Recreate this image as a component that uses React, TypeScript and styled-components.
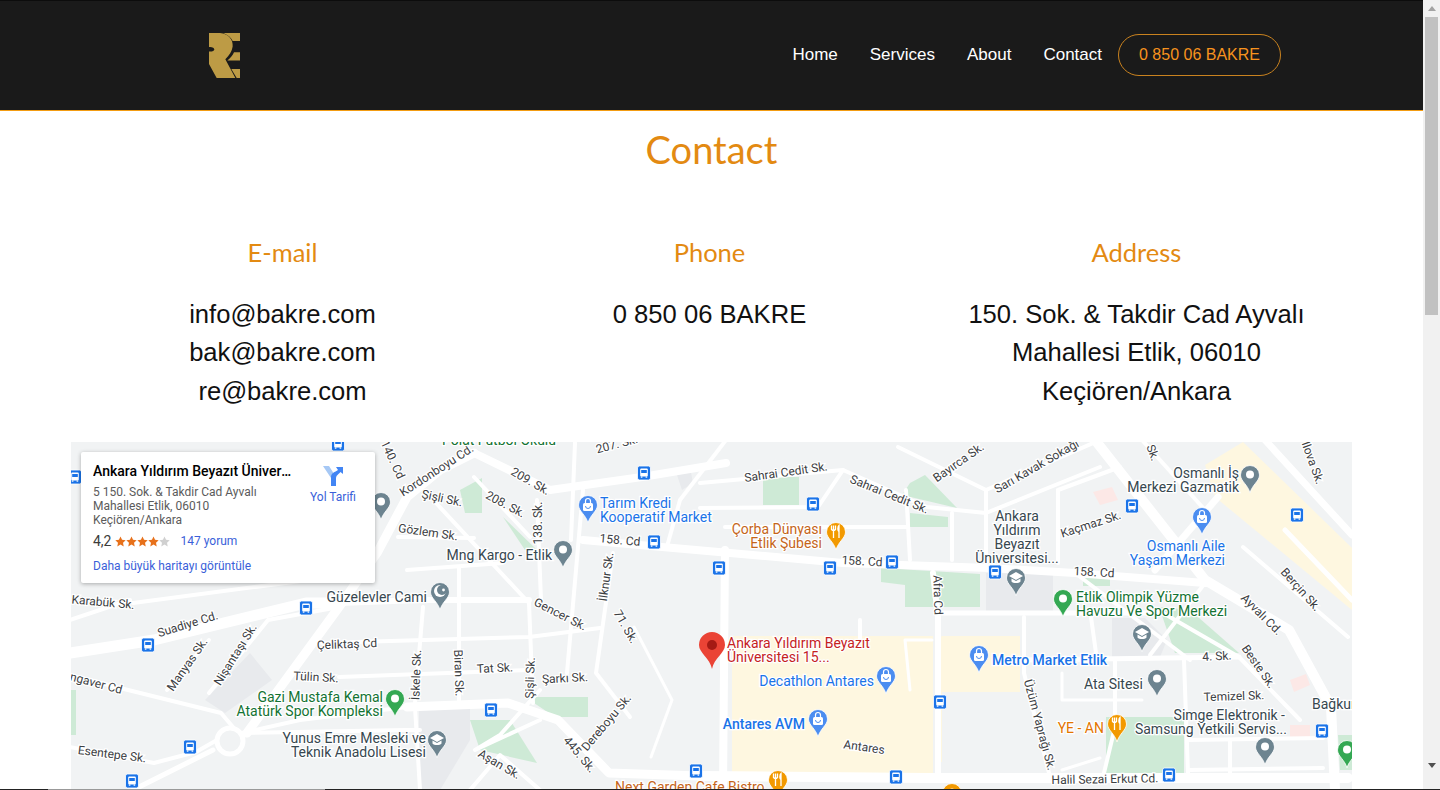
import React from "react";
import styled, { createGlobalStyle } from "styled-components";

const Global = createGlobalStyle`
  html, body { margin: 0; padding: 0; height: 790px; overflow: hidden; background: #fff; }
  * { box-sizing: border-box; }
`;

const Viewport = styled.div`
  display: flex;
  width: 1440px;
  height: 790px;
  overflow: hidden;
  position: relative;
`;
const Page = styled.div`
  width: 1423px;
  height: 790px;
  overflow: hidden;
  font-family: "Liberation Sans", Arial, sans-serif;
`;
const Header = styled.header`
  height: 111px;
  background: #1a1a1a;
  border-top: 1px solid #0c0c0c;
  border-bottom: 1px solid #f39c12;
  display: flex;
  align-items: flex-start;
  justify-content: space-between;
  padding: 32px 142px 0 209px;
`;
const Logo = styled.svg`
  width: 31px;
  height: 45px;
  display: block;
`;
const Nav = styled.nav`
  display: flex;
  align-items: center;
  margin-top: 1px;
`;
const NavLink = styled.a`
  color: #fff;
  font-size: 17px;
  line-height: 42px;
  margin-right: 32px;
  &:nth-child(4) { margin-right: 16px; }
`;
const PhoneButton = styled.a`
  width: 163px;
  height: 42px;
  line-height: 40px;
  text-align: center;
  border: 1px solid #c9821f;
  border-radius: 21px;
  color: #f7931e;
  font-size: 16px;
`;
const Title = styled.h1`
  margin: 0;
  padding-top: 14px;
  height: 103px;
  text-align: center;
  color: #e38a12;
  font-family: Lato, sans-serif;
  font-weight: 400;
  font-size: 38px;
  line-height: 48px;
`;
const Columns = styled.section`
  display: grid;
  grid-template-columns: repeat(3, 427px);
  padding-left: 69px;
  height: 228px;
  padding-top: 20px;
`;
const Column = styled.div`
  text-align: center;
`;
const ColumnTitle = styled.h2`
  margin: 0 0 24px;
  color: #e38a12;
  font-family: Lato, sans-serif;
  font-weight: 400;
  font-size: 25.5px;
  line-height: 37px;
`;
const ColumnText = styled.p`
  margin: 0 auto;
  max-width: 370px;
  color: #111;
  font-size: 25.6px;
  line-height: 38.4px;
`;
const MapFrame = styled.div`
  position: relative;
  width: 1281px;
  height: 348px;
  margin-left: 71px;
  background: #f1f3f4;
  overflow: hidden;
`;
const MapSvg = styled.svg`
  display: block;
  width: 1281px;
  height: 348px;
`;
const RoadLine = styled.polyline<{ $w: number }>`
  fill: none;
  stroke: #fff;
  stroke-width: ${(p) => p.$w}px;
  stroke-linejoin: round;
  stroke-linecap: round;
`;
const Roundabout = styled.circle`
  fill: #f1f3f4;
  stroke: #fff;
  stroke-width: 5px;
`;
const Area = styled.polygon<{ $c: string }>`
  fill: ${(p) => p.$c};
`;
const RoadName = styled.text`
  font-family: Roboto, sans-serif;
  font-size: 12px;
  fill: #3c4043;
  text-anchor: middle;
  dominant-baseline: middle;
  stroke: #fff;
  stroke-width: 2.5px;
  paint-order: stroke;
`;
const PoiName = styled.text<{ $c: string; $a: string; $b?: boolean }>`
  font-family: Roboto, sans-serif;
  font-size: 14px;
  font-weight: ${(p) => (p.$b ? 500 : 400)};
  fill: ${(p) => p.$c};
  text-anchor: ${(p) => p.$a};
  stroke: #fff;
  stroke-width: 2.5px;
  paint-order: stroke;
`;
const InfoCard = styled.div`
  position: absolute;
  left: 10px;
  top: 10px;
  width: 294px;
  height: 131px;
  background: #fff;
  border-radius: 2px;
  box-shadow: 0 1px 4px rgba(0, 0, 0, 0.3);
  padding: 10px 12px;
  display: flex;
  justify-content: space-between;
  font-family: Roboto, sans-serif;
`;
const InfoMain = styled.div`
  width: 205px;
`;
const PlaceName = styled.div`
  font-size: 14px;
  font-weight: 500;
  color: #000;
  line-height: 18px;
  white-space: nowrap;
  overflow: hidden;
  text-overflow: ellipsis;
`;
const PlaceAddress = styled.div`
  margin-top: 5px;
  font-size: 12px;
  line-height: 14px;
  color: #5b5b5b;
`;
const RatingRow = styled.div`
  display: flex;
  align-items: center;
  margin-top: 5px;
  height: 18px;
`;
const RatingValue = styled.span`
  font-size: 14px;
  color: #3c3c3c;
  margin-right: 3px;
`;
const Stars = styled.span`
  display: flex;
  width: 66px;
`;
const Star = styled.svg`
  width: 11px;
  height: 11px;
`;
const InfoLink = styled.a`
  color: #3a5fd9;
  font-size: 12px;
`;
const LargerLink = styled(InfoLink)`
  display: block;
  margin-top: 8px;
  line-height: 16px;
`;
const Directions = styled.div`
  width: 50px;
  margin-right: 5px;
  display: flex;
  flex-direction: column;
  align-items: center;
  padding-top: 3px;
`;
const DirectionsIcon = styled.svg`
  width: 22px;
  height: 22px;
  margin-bottom: 3px;
`;
const ScrollBar = styled.div`
  width: 17px;
  height: 790px;
  background: #f1f1f1;
  display: flex;
  flex-direction: column;
  align-items: center;
`;
const ArrowUp = styled.div`
  width: 0;
  height: 0;
  margin: 6px 0 5px;
  border-left: 4px solid transparent;
  border-right: 4px solid transparent;
  border-bottom: 5px solid #a3a3a3;
`;
const Thumb = styled.div`
  width: 13px;
  height: 298px;
  margin-top: 1px;
  background: #c1c1c1;
`;
const ArrowDown = styled.div`
  width: 0;
  height: 0;
  margin-top: 448px;
  border-left: 4px solid transparent;
  border-right: 4px solid transparent;
  border-top: 5px solid #505050;
`;
const BottomEdge = styled.div`
  position: absolute;
  left: 0;
  right: 0;
  bottom: 0;
  height: 1px;
  background: linear-gradient(to right, #222 48px, #999 48px, #999 325px, #222 325px);
`;

const wide: [number, string][] = [
  [11, "70,653 154,640 306,603 339,603"],
  [6, "339,603 420,600 529,600"],
  [9, "247,733 339,607 377,553 407,497 440,470 474,453"],
  [8, "474,453 550,490 642,477 726,463"],
  [8, "583,540 730,553 843,563 990,568 1075,573 1205,583"],
  [8, "725,550 723,790"],
  [10, "700,776 927,778 1348,778"],
  [9, "407,707 508,703 558,720 609,773 730,777"],
  [4, "242,733 300,720 407,707"],
  [10, "1095,440 1205,580 1289,630 1331,707 1335,790"],
  [7, "1218,497 1155,570"],
  [7, "1265,440 1352,535"],
];
const thin: [number, string][] = [
  [4, "133,603 331,577"], [4, "70,675 120,688 221,713 238,733"], [4, "70,747 154,763 196,752 217,740"],
  [5, "133,790 213,750"], [4, "415,707 420,790"], [4, "242,733 407,730 420,730"],
  [4, "339,677 529,670"], [4, "322,643 529,637 600,628"], [4, "459,567 459,703"], [4, "423,607 415,703"],
  [4, "407,570 503,563"], [4, "529,603 533,703"], [4, "436,503 529,603"], [4, "474,477 530,537"],
  [4, "537,500 541,600"], [4, "583,490 567,673"], [4, "575,443 571,540"], [4, "613,553 596,673 630,717"],
  [3, "634,627 672,700 651,757"], [4, "726,440 680,500 668,543"], [4, "398,537 474,538"],
  [4, "209,693 268,620 339,607"], [4, "167,690 209,640"], [4, "700,483 843,470 927,507 986,513 1100,467"],
  [4, "700,508 818,507 843,470"], [4, "725,527 906,527"], [4, "906,490 910,560"], [4, "952,513 952,560"],
  [4, "986,490 986,567"], [4, "1058,490 1058,563"], [4, "898,447 986,490"], [4, "986,490 1100,440"],
  [4, "1058,490 1120,467"], [6, "933,573 938,617 938,777"], [5, "938,613 1163,613"],
  [4, "1024,617 1024,673 1049,773"], [4, "1091,617 1096,653"], [5, "1024,660 1239,657"],
  [4, "1115,660 1115,727 1104,773"], [4, "1184,660 1188,773"], [3, "1062,673 1062,700 1142,700"],
  [4, "1188,740 1323,738"], [4, "1230,740 1230,773"], [4, "1188,770 1323,768"],
  [4, "1243,547 1348,637"], [4, "1142,440 1205,510"], [5, "1285,530 1352,600"],
  [4, "1163,613 1239,657 1300,720"], [4, "1075,573 1190,660"], [4, "1205,583 1150,655"],
  [3, "910,690 905,640 932,640"], [4, "860,620 860,640"], [4, "70,620 130,600"],
  [4, "540,690 500,735 475,750 540,720"], [4, "470,790 500,755 540,790"], [3, "1062,770 1100,758"],
];
const areas: [string, string][] = [
  ["#fef7e0", "732,636 933,636 933,775 732,775"],
  ["#fef7e0", "942,636 1020,636 1020,692 942,692 942,762 936,762 936,640"],
  ["#fef7e0", "1243,442 1352,548 1352,610 1215,497 1205,465"],
  ["#ceead6", "763,477 799,477 799,505 763,505"],
  ["#ceead6", "910,483 925,475 957,508 902,495"],
  ["#ceead6", "910,513 948,517 948,527 910,527"],
  ["#ceead6", "881,568 980,574 980,607 905,607 905,585 881,582"],
  ["#ceead6", "1083,578 1110,578 1110,586 1083,586"],
  ["#ceead6", "1159,607 1190,610 1239,653 1175,653"],
  ["#ceead6", "1106,717 1184,717 1184,773 1106,773"],
  ["#ceead6", "1338,735 1352,735 1352,770 1340,770"],
  ["#ceead6", "460,490 482,478 482,513 465,513"],
  ["#ceead6", "503,517 537,550 525,550"],
  ["#ceead6", "525,697 588,697 588,717 555,717"],
  ["#ceead6", "470,720 510,720 537,763 480,750"],
  ["#ceead6", "70,690 76,690 76,735 70,735"],
  ["#e8eaed", "986,573 1053,574 1053,612 986,612"],
  ["#e8eaed", "1112,618 1145,618 1167,640 1160,657 1112,657"],
  ["#e8eaed", "205,700 250,653 272,680 225,713"],
  ["#e8eaed", "419,707 470,707 470,740 440,790 419,790"],
  ["#e8eaed", "676,472 690,467 693,483 682,490"],
  ["#fce8e6", "1093,492 1112,487 1118,500 1100,505"],
  ["#fce8e6", "1290,680 1306,674 1310,685 1294,692"],
  ["#fce8e6", "1290,725 1310,725 1310,738 1290,738"],
];
const roadNames: [string, number, number, number][] = [
  ["Kordonboyu Cd.", 437, 471, -33], ["209. Sk.", 530, 482, 30], ["208. Sk.", 505, 505, 28], ["Şişli Sk.", 442, 499, 12],
  ["Gözlem Sk.", 428, 533, 8], ["138. Sk.", 539, 523, -90], ["140. Cd", 392, 460, 65], ["207. Sk.", 617, 445, -15],
  ["158. Cd", 620, 541, 5], ["İlknur Sk.", 607, 577, -82], ["71. Sk.", 625, 627, 60], ["Gencer Sk.", 560, 615, 27],
  ["Karabük Sk.", 103, 603, 5], ["Suadiye Cd.", 188, 625, -17], ["Manyas Sk.", 188, 665, -55], ["Nişantaşı Sk.", 236, 655, -58],
  ["Çeliktaş Cd", 347, 645, -2], ["Tülin Sk.", 316, 678, 3], ["İskele Sk.", 417, 675, -88], ["Biran Sk.", 458, 673, 88],
  ["Tat Sk.", 495, 669, -3], ["Şişli Sk.", 531, 678, -88], ["Şarkı Sk.", 565, 679, -3], ["Dereboyu Sk.", 607, 723, -50],
  ["445. Sk.", 579, 755, 50], ["Aşan Sk.", 499, 765, 30], ["Esentepe Sk.", 112, 755, 7], ["ngaver Cd", 96, 684, 15],
  ["Sahrai Cedit Sk.", 786, 473, -8], ["Sahrai Cedit Sk.", 889, 495, 22], ["Bayırca Sk.", 959, 463, -35],
  ["Sarı Kavak Sokağı", 1037, 467, -30], ["Kaçmaz Sk.", 1091, 525, -18], ["158. Cd", 862, 562, 3], ["158. Cd", 1094, 573, 3],
  ["Afra Cd", 937, 595, 88], ["Ayvalı Cd.", 1261, 615, 45], ["Berçin Sk.", 1300, 590, 48], ["Beste Sk.", 1258, 667, 55],
  ["4. Sk.", 1217, 657, -3], ["Temizel Sk.", 1234, 697, -2], ["Üzüm Yaprağı Sk.", 1039, 725, 75], ["Antares", 864, 748, 8],
  ["Halil Sezai Erkut Cd.", 1105, 780, -1], ["Ilova Sk.", 1312, 463, 70], ["Sk.", 1152, 453, 70],
];
const BLUE = "#1a73e8";
const DARK = "#37474f";
const GREEN = "#137333";
const ORANGE = "#c5651a";
const poiNames: [string, number, number, string, string, boolean?][] = [
  ["Polat Futbol Okulu", 442, 445, GREEN, "start"],
  ["Tarım Kredi", 600, 508, BLUE, "start"], ["Kooperatif Market", 600, 522, BLUE, "start"],
  ["Mng Kargo - Etlik", 552, 560, DARK, "end"], ["Güzelevler Cami", 427, 602, DARK, "end"],
  ["Ankara Yıldırım Beyazıt", 727, 648, "#c5221f", "start"], ["Üniversitesi 15...", 727, 662, "#c5221f", "start"],
  ["Çorba Dünyası", 822, 534, ORANGE, "end"], ["Etlik Şubesi", 822, 548, ORANGE, "end"],
  ["Ankara", 1017, 521, DARK, "middle"], ["Yıldırım", 1017, 535, DARK, "middle"], ["Beyazıt", 1017, 549, DARK, "middle"],
  ["Üniversitesi...", 1017, 563, DARK, "middle"], ["Osmanlı İş", 1239, 478, DARK, "end"], ["Merkezi Gazmatik", 1239, 492, DARK, "end"],
  ["Osmanlı Aile", 1225, 551, BLUE, "end"], ["Yaşam Merkezi", 1225, 565, BLUE, "end"],
  ["Etlik Olimpik Yüzme", 1076, 602, GREEN, "start"], ["Havuzu Ve Spor Merkezi", 1076, 616, GREEN, "start"],
  ["Metro Market Etlik", 992, 665, BLUE, "start", true], ["Decathlon Antares", 874, 686, BLUE, "end"],
  ["Antares AVM", 805, 729, BLUE, "end", true], ["Ata Sitesi", 1143, 689, DARK, "end"], ["YE - AN", 1104, 733, "#e37400", "end"],
  ["Simge Elektronik -", 1285, 720, DARK, "end"], ["Samsung Yetkili Servis...", 1287, 734, DARK, "end"],
  ["Bağkur", 1312, 709, DARK, "start"], ["Gazi Mustafa Kemal", 383, 702, GREEN, "end"], ["Atatürk Spor Kompleksi", 383, 716, GREEN, "end"],
  ["Yunus Emre Mesleki ve", 426, 743, DARK, "end"], ["Teknik Anadolu Lisesi", 426, 757, DARK, "end"],
  ["Next Garden Cafe Bistro", 615, 792, ORANGE, "start"],
];
const buses: [number, number][] = [
  [75, 477], [338, 444], [644, 473], [654, 542], [719, 568], [306, 608], [148, 645], [491, 710], [190, 747], [132, 781],
  [696, 771], [813, 504], [830, 568], [892, 562], [995, 572], [1132, 506], [1297, 515], [940, 702], [896, 777], [1169, 775], [1322, 731],
];
type Kind = "hole" | "shop" | "mortar" | "fork" | "moon";
const GREY = "#6d8490";
const pins: [number, number, string, Kind][] = [
  [381, 520, GREY, "hole"], [588, 523, "#4b8df0", "shop"], [563, 568, GREY, "hole"], [440, 610, GREY, "moon"],
  [836, 550, "#f29900", "fork"], [1016, 596, GREY, "mortar"], [1250, 493, GREY, "hole"], [1202, 535, "#4b8df0", "shop"],
  [1063, 617, "#34a853", "hole"], [1142, 652, GREY, "mortar"], [979, 673, "#4b8df0", "shop"], [886, 694, "#4b8df0", "shop"],
  [818, 737, "#4b8df0", "shop"], [1157, 697, GREY, "hole"], [1117, 742, "#f29900", "fork"], [1265, 765, GREY, "hole"],
  [1347, 768, "#34a853", "hole"], [778, 798, "#f29900", "fork"], [952, 811, "#f29900", "hole"], [395, 717, "#34a853", "hole"],
  [437, 758, GREY, "mortar"],
];

const PinGlyph = ({ kind, color }: { kind: Kind; color: string }) => {
  if (kind === "hole") return <circle cy={-18.5} r={4} fill="#fff" />;
  if (kind === "shop")
    return (
      <g>
        <rect x={-5} y={-20} width={10} height={8} rx={1.5} fill="#fff" />
        <path d="M-2.5 -20 V-22 A2.5 2.500 0 0 1 2.5 -22 V-20" fill="none" stroke="#fff" strokeWidth={1.2} />
        <path d="M-2.5 -17 A2.5 2.500 0 0 0 2.5 -17" fill="none" stroke={color} strokeWidth={1} />
      </g>
    );
  if (kind === "mortar")
    return (
      <g fill="#fff">
        <path d="M0 -24 L7 -20 L0 -16 L-7 -20 Z" />
        <path d="M-4.500 -17.500 L0 -15 L4.500 -17.500 V-14.500 C3 -12.500 -3 -12.500 -4.500 -14.500 Z" />
      </g>
    );
  if (kind === "fork")
    return (
      <g stroke="#fff" fill="none" strokeWidth={1.3}>
        <path d="M-2.5 -24.500 V-12 M-4.500 -24.500 V-20.500 Q-2.500 -18.500 -0.500 -20.500 V-24.500" />
        <path d="M3 -12 V-24.500 C1.500 -23 1.500 -19 3 -18.500" fill="#fff" />
      </g>
    );
  return (
    <g>
      <circle cy={-19} r={6} fill="#fff" />
      <circle cx={2} cy={-20} r={5} fill={color} />
      <circle cx={3.5} cy={-20} r={1.4} fill="#fff" />
    </g>
  );
};

const Pin = ({ x, y, color, kind }: { x: number; y: number; color: string; kind: Kind }) => (
  <g transform={`translate(${x} ${y})`}>
    <path
      d="M0 0 C-2 -8 -9.500 -12 -9.500 -18 A9.500 9.500 0 1 1 9.500 -18 C9.500 -12 2 -8 0 0 Z"
      fill={color}
      stroke="#fff"
      strokeWidth={0.8}
    />
    <PinGlyph kind={kind} color={color} />
  </g>
);

const Bus = ({ x, y }: { x: number; y: number }) => (
  <g transform={`translate(${x} ${y})`}>
    <rect x={-6.5} y={-7} width={13} height={14} rx={2} fill="#1a73e8" stroke="#fff" strokeWidth={0.8} />
    <rect x={-3.8} y={-4.5} width={7.6} height={8} rx={1} fill="#fff" />
    <rect x={-2.8} y={-3} width={5.6} height={3} fill="#1a73e8" />
    <rect x={-3.2} y={3.5} width={1.6} height={1.2} fill="#fff" />
    <rect x={1.6} y={3.5} width={1.6} height={1.2} fill="#fff" />
  </g>
);

const StarIcon = ({ c }: { c: string }) => (
  <Star viewBox="0 0 24 24">
    <path d="M12 1l3.400 7.300 7.900 1-5.800 5.500 1.500 8L12 18.800 5 22.800l1.500-8L.7 9.300l7.900-1z" fill={c} />
  </Star>
);

export default function App() {
  return (
    <Viewport>
      <Global />
      <Page>
        <Header>
          <Logo viewBox="85 98 93 134" preserveAspectRatio="none" aria-label="Bakre">
            <path
              fill="#bd9b45"
              d="M85 98 H118 C144 100 158 118 156 138 C154 152 146 164 134 176 L164 232 H108 L85 190 V153 C94 154 101 151 101 147 C101 142 94 139 85 140 Z"
            />
            <path fill="#bd9b45" d="M128 98 H178 V122 H156 C152 112 142 104 128 98Z" />
            <path fill="#bd9b45" d="M160 155 H178 V180 H140 C150 172 156 164 160 155Z" />
            <path fill="#bd9b45" d="M152 205 H178 V232 H168Z" />
          </Logo>
          <Nav>
            <NavLink>Home</NavLink>
            <NavLink>Services</NavLink>
            <NavLink>About</NavLink>
            <NavLink>Contact</NavLink>
            <PhoneButton>0 850 06 BAKRE</PhoneButton>
          </Nav>
        </Header>
        <Title>Contact</Title>
        <Columns>
          <Column>
            <ColumnTitle>E-mail</ColumnTitle>
            <ColumnText>
              info@bakre.com
              <br />
              bak@bakre.com
              <br />
              re@bakre.com
            </ColumnText>
          </Column>
          <Column>
            <ColumnTitle>Phone</ColumnTitle>
            <ColumnText>0 850 06 BAKRE</ColumnText>
          </Column>
          <Column>
            <ColumnTitle>Address</ColumnTitle>
            <ColumnText>150. Sok. &amp; Takdir Cad Ayvalı Mahallesi Etlik, 06010 Keçiören/Ankara</ColumnText>
          </Column>
        </Columns>
        <MapFrame>
          <MapSvg viewBox="71 442 1281 348">
            {areas.map(([c, p], i) => (
              <Area key={i} $c={c} points={p} />
            ))}
            {thin.map(([w, p], i) => (
              <RoadLine key={i} $w={w} points={p} />
            ))}
            {wide.map(([w, p], i) => (
              <RoadLine key={i} $w={w} points={p} />
            ))}
            <Roundabout cx={230} cy={741} r={13} />
            {roadNames.map(([t, x, y, r], i) => (
              <RoadName key={i} x={x} y={y} transform={`rotate(${r} ${x} ${y})`}>
                {t}
              </RoadName>
            ))}
            {buses.map(([x, y], i) => (
              <Bus key={i} x={x} y={y} />
            ))}
            {pins.map(([x, y, c, k], i) => (
              <Pin key={i} x={x} y={y} color={c} kind={k} />
            ))}
            <g transform="translate(712 669)">
              <path d="M0 0 C-2 -11 -13 -16 -13 -24 A13 13 0 1 1 13 -24 C13 -16 2 -11 0 0 Z" fill="#ea4335" />
              <circle cy={-24} r={5} fill="#a51a14" />
            </g>
            {poiNames.map(([t, x, y, c, a, b], i) => (
              <PoiName key={i} x={x} y={y} $c={c} $a={a} $b={b}>
                {t}
              </PoiName>
            ))}
          </MapSvg>
          <InfoCard>
            <InfoMain>
              <PlaceName>Ankara Yıldırım Beyazıt Üniversitesi</PlaceName>
              <PlaceAddress>
                5 150. Sok. &amp; Takdir Cad Ayvalı
                <br />
                Mahallesi Etlik, 06010
                <br />
                Keçiören/Ankara
              </PlaceAddress>
              <RatingRow>
                <RatingValue>4,2</RatingValue>
                <Stars>
                  <StarIcon c="#e7711b" />
                  <StarIcon c="#e7711b" />
                  <StarIcon c="#e7711b" />
                  <StarIcon c="#e7711b" />
                  <StarIcon c="#d0d0d0" />
                </Stars>
                <InfoLink>147 yorum</InfoLink>
              </RatingRow>
              <LargerLink>Daha büyük haritayı görüntüle</LargerLink>
            </InfoMain>
            <Directions>
              <DirectionsIcon viewBox="0 0 22 22">
                <path d="M1 1 L7 1 L14 12 V21 H9 V13 Z" fill="#a6c8f5" />
                <path d="M9 21 V12 C9 8 13 7 16 5 L14 2 H21 V9 L18.500 7 C16 10 14 10 14 14 V21 Z" fill="#4285f4" />
              </DirectionsIcon>
              <InfoLink>Yol Tarifi</InfoLink>
            </Directions>
          </InfoCard>
        </MapFrame>
      </Page>
      <ScrollBar>
        <ArrowUp />
        <Thumb />
        <ArrowDown />
      </ScrollBar>
      <BottomEdge />
    </Viewport>
  );
}
